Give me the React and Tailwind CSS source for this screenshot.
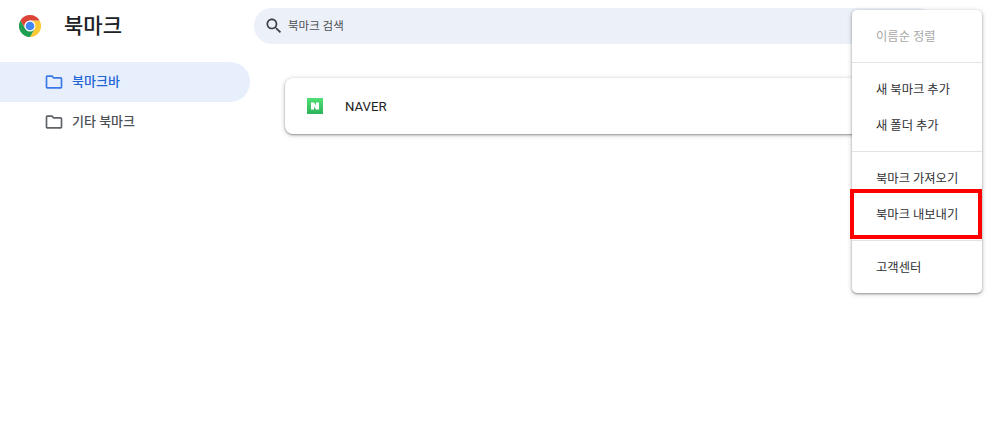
const FONT = "font-['Roboto','Noto_Sans_CJK_KR',sans-serif]"

const MENU = [
  [{ label: '이름순 정렬', disabled: true }],
  [{ label: '새 북마크 추가' }, { label: '새 폴더 추가' }],
  [{ label: '북마크 가져오기' }, { label: '북마크 내보내기' }],
  [{ label: '고객센터' }],
]

function ChromeLogo() {
  return (
    <svg width="22" height="22" viewBox="0 0 48 48">
      <path d="M24 24 L24 12 L44.8 12 A24 24 0 0 1 24 48 L34.4 30 Z" fill="#fcc934" />
      <path d="M24 24 L34.4 30 L24 48 A24 24 0 0 1 3.2 12 L13.6 30 Z" fill="#1e9e50" />
      <path d="M3.2 12 A24 24 0 0 1 24 0 A24 24 0 0 1 44.8 12 L24 12 A12 12 0 0 0 13.6 30 Z" fill="#db4437" />
      <circle cx="24" cy="24" r="12" fill="#fff" />
      <circle cx="24" cy="24" r="9.5" fill="#4285f4" />
    </svg>
  )
}

function SearchIcon() {
  return (
    <svg width="20" height="20" viewBox="0 0 24 24" fill="currentColor" className="text-[#3c4043]">
      <path d="M15.5 14h-.79l-.28-.27C15.41 12.59 16 11.11 16 9.5 16 5.91 13.09 3 9.5 3S3 5.91 3 9.5 5.91 16 9.5 16c1.61 0 3.09-.59 4.23-1.57l.27.28v.79l5 4.99L20.49 19l-4.99-5zm-6 0C7.01 14 5 11.99 5 9.5S7.01 5 9.5 5 14 7.01 14 9.5 11.99 14 9.5 14z" />
    </svg>
  )
}

function Folder({ className }) {
  return (
    <svg width="20" height="20" viewBox="0 0 24 24" fill="currentColor" className={className}>
      <path d="M9.17 6l2 2H20v10H4V6h5.17M10 4H4c-1.1 0-1.99.9-1.99 2L2 18c0 1.1.9 2 2 2h16c1.1 0 2-.9 2-2V8c0-1.1-.9-2-2-2h-8l-2-2z" />
    </svg>
  )
}

function NaverIcon() {
  return (
    <div className="flex h-4 w-4 items-center justify-center bg-gradient-to-b from-[#50e072] to-[#2db45c]">
      <svg width="8" height="8" viewBox="0 0 8 8">
        <path d="M0 0.5 H3 L5 3.4 V0.5 H8 V7.5 H5 L3 4.6 V7.5 H0 Z" fill="#fff" />
      </svg>
    </div>
  )
}

export default function App() {
  return (
    <div className={`relative h-[432px] w-[995px] overflow-hidden bg-white ${FONT}`}>
      {/* Header */}
      <div className="flex h-[52px] items-start">
        <div className="flex w-[254px] items-center pl-[19px] pt-[15px]">
          <ChromeLogo />
          <span className="ml-[23px] text-[21px] leading-[20px] font-medium text-[#202124]">북마크</span>
        </div>
        <div className="mt-2 flex h-9 w-[682px] items-center rounded-full bg-[#ecf0f8] pl-[10px]">
          <SearchIcon />
          <span className="ml-1 pt-[2px] text-[11.5px] text-[#4d5156]">북마크 검색</span>
        </div>
      </div>

      <div className="flex">
        {/* Sidebar */}
        <div className="mt-[10px] w-[250px]">
          <div className="flex h-10 items-center rounded-r-[20px] bg-[#e7effd] pl-[44px] text-[#1f65d6]">
            <Folder className="text-[#3b78e7]" />
            <span className="ml-2 text-[13px] font-medium">북마크바</span>
          </div>
          <div className="flex h-10 items-center pl-[44px] text-[#5f6368]">
            <Folder />
            <span className="ml-2 text-[13px] font-medium text-[#4d5156]">기타 북마크</span>
          </div>
        </div>

        {/* List */}
        <div className="ml-[35px] mt-[26px] flex h-14 w-[650px] items-center rounded-lg bg-white pl-[22px] shadow-[0_1px_2px_rgba(60,64,67,0.45),0_1px_4px_1px_rgba(60,64,67,0.2)]">
          <NaverIcon />
          <span className="ml-[22px] pt-[2px] text-[13.2px] text-[#202124]">NAVER</span>
        </div>
      </div>

      {/* Menu */}
      <div className="absolute left-[852px] top-[10px] w-[130px] rounded-[5px] bg-white shadow-[0_1px_2px_rgba(60,64,67,0.45),0_1px_4px_1px_rgba(60,64,67,0.2)]">
        {MENU.map((group, i) => (
          <div key={i} className={`py-2 ${i > 0 ? 'border-t border-[#e3e3e3]' : ''}`}>
            {group.map(item => (
              <div
                key={item.label}
                className={`flex h-9 items-center pl-6 pt-[3px] text-[12.3px] ${item.disabled ? 'text-[#a8a8a8]' : 'text-[#303134]'}`}
              >
                {item.label}
              </div>
            ))}
          </div>
        ))}
      </div>

      {/* Highlight box */}
      <div className="absolute left-[850px] top-[189px] h-[50px] w-[132px] border-4 border-[#fe0000]" />
    </div>
  )
}
